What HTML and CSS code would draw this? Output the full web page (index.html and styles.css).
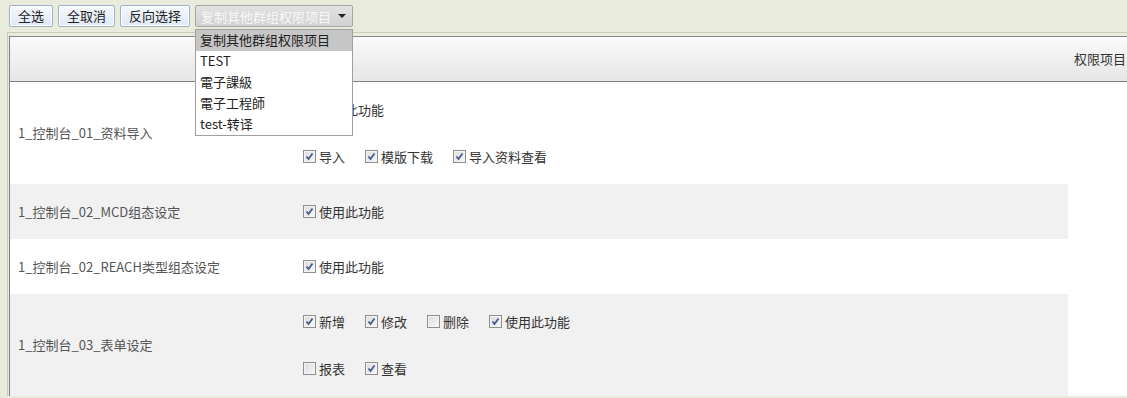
FILE: index.html
```html
<!DOCTYPE html>
<html lang="zh-CN">
<head>
    <meta charset="UTF-8">
    <title>权限项目</title>
    <link rel="stylesheet" href="styles.css">
</head>
<body>
    <div class="toolbar">
        <button class="btn">全选</button>
        <button class="btn">全取消</button>
        <button class="btn">反向选择</button>
        <div class="select-wrap">
            <div class="select">
                <span class="select-text">复制其他群组权限项目</span>
                <span class="arrow"></span>
            </div>
            <ul class="dropdown">
                <li class="active">复制其他群组权限项目</li>
                <li>TEST</li>
                <li>電子課級</li>
                <li>電子工程師</li>
                <li>test-转译</li>
            </ul>
        </div>
    </div>

    <div class="frame">
        <div class="panel">
            <div class="panel-head">权限项目</div>

            <div class="row">
                <div class="name">1_控制台_01_资料导入</div>
                <div class="opts">
                    <div class="line">
                        <label class="cb"><span class="box on"></span>使用此功能</label>
                    </div>
                    <div class="line">
                        <label class="cb"><span class="box on"></span>导入</label>
                        <label class="cb"><span class="box on"></span>模版下载</label>
                        <label class="cb"><span class="box on"></span>导入资料查看</label>
                    </div>
                </div>
            </div>

            <div class="row alt">
                <div class="name">1_控制台_02_MCD组态设定</div>
                <div class="opts">
                    <div class="line">
                        <label class="cb"><span class="box on"></span>使用此功能</label>
                    </div>
                </div>
            </div>

            <div class="row">
                <div class="name">1_控制台_02_REACH类型组态设定</div>
                <div class="opts">
                    <div class="line">
                        <label class="cb"><span class="box on"></span>使用此功能</label>
                    </div>
                </div>
            </div>

            <div class="row alt">
                <div class="name">1_控制台_03_表单设定</div>
                <div class="opts">
                    <div class="line">
                        <label class="cb"><span class="box on"></span>新增</label>
                        <label class="cb"><span class="box on"></span>修改</label>
                        <label class="cb"><span class="box"></span>删除</label>
                        <label class="cb"><span class="box on"></span>使用此功能</label>
                    </div>
                    <div class="line">
                        <label class="cb"><span class="box"></span>报表</label>
                        <label class="cb"><span class="box on"></span>查看</label>
                    </div>
                </div>
            </div>
        </div>
    </div>
</body>
</html>
```

FILE: styles.css
```css
/* General */
html {
    overflow: hidden;
}

body {
    margin: 0;
    font-family: "Noto Sans CJK SC", "Noto Sans", sans-serif;
    font-size: 13px;
    color: #333;
    background-color: #e9ebdc;
    overflow: hidden;
    height: 398px;
}

/* Toolbar */
.toolbar {
    display: flex;
    align-items: flex-start;
    gap: 5px;
    padding: 5px 0 0 9px;
    height: 27px;
    box-sizing: border-box;
}

.btn {
    height: 22px;
    padding: 0 8px;
    font-family: inherit;
    font-size: 13px;
    line-height: 20px;
    color: #222;
    border: 1px solid #9fb0c9;
    border-radius: 2px;
    background: linear-gradient(#f6f9fd, #dfe8f5);
    box-shadow: inset 0 0 0 1px #fbfdff;
}

.select-wrap {
    position: relative;
}

.select {
    width: 158px;
    height: 22px;
    box-sizing: border-box;
    display: flex;
    align-items: center;
    justify-content: space-between;
    padding: 0 6px 0 5px;
    border: 1px solid #a6a6a6;
    border-radius: 2px;
    background: linear-gradient(#e2e2e2, #d2d2d2);
    color: #f7f7f7;
}

.arrow {
    width: 0;
    height: 0;
    border-left: 4px solid transparent;
    border-right: 4px solid transparent;
    border-top: 4px solid #222;
}

.dropdown {
    position: absolute;
    left: 0;
    top: 24px;
    width: 158px;
    box-sizing: border-box;
    margin: 0;
    padding: 0;
    list-style: none;
    background: #fff;
    border: 1px solid #a0a0a0;
    z-index: 10;
}

.dropdown li {
    height: 21px;
    line-height: 20px;
    padding-left: 4px;
    color: #222;
}

.dropdown li.active {
    background-color: #c6c6c6;
}

/* Panel */
.frame {
    margin: 5px 0 0 7px;
    border-top: 1px solid #c9cbbf;
    border-left: 1px solid #c9cbbf;
    padding: 3px 0 0 1px;
}

.panel {
    background-color: #fff;
    border-left: 1px solid #7f7f7f;
    border-top: 1px solid #8a8a8a;
}

.panel-head {
    height: 44px;
    line-height: 43px;
    text-align: right;
    padding-right: 1px;
    color: #333;
    background: linear-gradient(#fafafa, #e6e6e6);
    border-bottom: 1px solid #7f7f7f;
}

.row {
    display: grid;
    grid-template-columns: 293px 1fr;
    width: 1058px;
    align-items: center;
    padding: 17px 0 18px;
}

.row.alt {
    background-color: #f1f1f1;
}

.name {
    padding-left: 8px;
    color: #555;
}

.opts {
    display: flex;
    flex-direction: column;
    gap: 27px;
}

.line {
    display: flex;
    height: 20px;
    align-items: center;
    gap: 20px;
}

.cb {
    display: flex;
    align-items: center;
    gap: 3px;
}

.box {
    width: 13px;
    height: 13px;
    box-sizing: border-box;
    border: 1px solid #8e8f8f;
    background: linear-gradient(135deg, #dcdcdc, #f8f8f8);
    box-shadow: inset 0 0 0 1px #f4f4f4;
}

.box.on {
    background:
        url("data:image/svg+xml;utf8,<svg xmlns='http://www.w3.org/2000/svg' width='11' height='11'><path d='M2.5 5.5 L4.5 8 L8.5 2.5' fill='none' stroke='%23445d8c' stroke-width='1.8'/></svg>") center no-repeat,
        linear-gradient(135deg, #dcdcdc, #f8f8f8);
}
```
